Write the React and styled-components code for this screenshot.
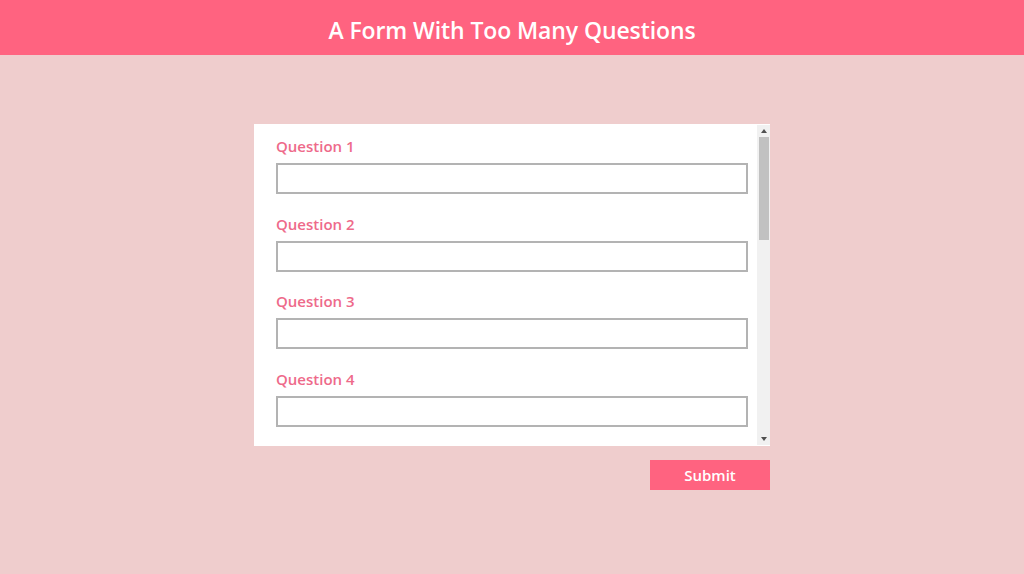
import React from "react";
import styled, { createGlobalStyle } from "styled-components";

const GlobalStyle = createGlobalStyle`
  html, body {
    margin: 0;
    padding: 0;
    background: #efcdcd;
    font-family: "Open Sans", "Noto Sans", sans-serif;
  }
`;

const Header = styled.header`
  background: #ff6380;
  height: 55px;
  display: flex;
  align-items: center;
  justify-content: center;
`;

const Title = styled.h1`
  margin: 0;
  padding-top: 4px;
  color: #ffffff;
  font-size: 23px;
  font-weight: 600;
  letter-spacing: -0.1px;
`;

const Main = styled.main`
  display: flex;
  flex-direction: column;
  align-items: center;
  padding-top: 69px;
`;

const Wrapper = styled.div`
  width: 516px;
  display: flex;
  flex-direction: column;
  align-items: flex-end;
`;

const Card = styled.div`
  width: 100%;
  height: 322px;
  display: flex;
  background: #ffffff;
`;

const ScrollArea = styled.form`
  flex: 1;
  box-sizing: border-box;
  overflow-y: auto;
  scrollbar-width: none;
  padding: 11px 9px 16px 22px;

  &::-webkit-scrollbar {
    display: none;
  }
`;

const ScrollTrack = styled.div`
  width: 13px;
  margin: 1px 0 1px 0;
  background: #f1f1f1;
  display: flex;
  flex-direction: column;
  align-items: center;
`;

const ArrowButton = styled.div`
  height: 12px;
  width: 100%;
  display: flex;
  align-items: center;
  justify-content: center;
  flex: none;
`;

const Thumb = styled.div`
  width: 10px;
  height: 103px;
  background: #c1c1c1;
`;

const Spacer = styled.div`
  flex: 1;
`;

const Question = styled.div`
  display: flex;
  flex-direction: column;
  margin-bottom: 18.5px;
`;

const Label = styled.label`
  color: #ee6a8a;
  font-size: 15px;
  font-weight: 600;
  line-height: 22px;
  margin-bottom: 6px;
`;

const Input = styled.input`
  width: 472px;
  height: 31px;
  box-sizing: border-box;
  border: 2px solid #b3b3b3;
  background: #ffffff;
  outline: none;
  font-family: inherit;
  font-size: 14px;
  padding: 0 6px;
`;

const SubmitButton = styled.button`
  margin-top: 14px;
  width: 120px;
  height: 30px;
  border: none;
  background: #ff6380;
  color: #ffffff;
  font-family: inherit;
  font-size: 15px;
  font-weight: 600;
  cursor: pointer;
`;

const Arrow = ({ down }) => (
  <svg width="6" height="4" viewBox="0 0 6 4">
    <polygon points={down ? "0,0 6,0 3,4" : "3,0 6,4 0,4"} fill="#505050" />
  </svg>
);

const questions = Array.from({ length: 11 }, (_, i) => `Question ${i + 1}`);

export default function App() {
  return (
    <>
      <GlobalStyle />
      <Header>
        <Title>A Form With Too Many Questions</Title>
      </Header>
      <Main>
        <Wrapper>
          <Card>
            <ScrollArea onSubmit={(e) => e.preventDefault()}>
              {questions.map((q, i) => (
                <Question key={q}>
                  <Label htmlFor={`q${i}`}>{q}</Label>
                  <Input id={`q${i}`} type="text" />
                </Question>
              ))}
            </ScrollArea>
            <ScrollTrack>
              <ArrowButton>
                <Arrow />
              </ArrowButton>
              <Thumb />
              <Spacer />
              <ArrowButton>
                <Arrow down />
              </ArrowButton>
            </ScrollTrack>
          </Card>
          <SubmitButton type="button">Submit</SubmitButton>
        </Wrapper>
      </Main>
    </>
  );
}
